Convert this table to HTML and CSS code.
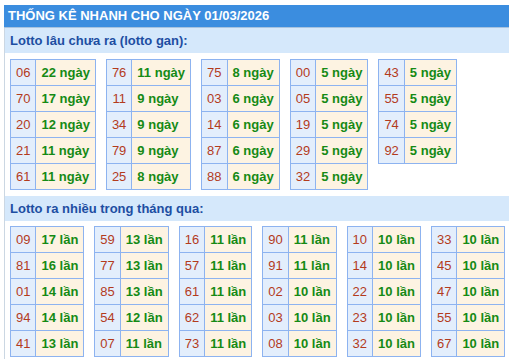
FILE: index.html
```html
<!DOCTYPE html>
<html lang="vi">
<head>
<meta charset="utf-8">
<title>Thống kê nhanh</title>
<link rel="stylesheet" href="styles.css">
</head>
<body>
<div class="box">
  <div class="head">THỐNG KÊ NHANH CHO NGÀY 01/03/2026</div>
  <div class="body">
    <div class="sub">Lotto lâu chưa ra (lotto gan):</div>
    <div class="tables">
      <table class="t"><tr><td class="n">06</td><td class="v">22 ngày</td></tr><tr><td class="n">70</td><td class="v">17 ngày</td></tr><tr><td class="n">20</td><td class="v">12 ngày</td></tr><tr><td class="n">21</td><td class="v">11 ngày</td></tr><tr><td class="n">61</td><td class="v">11 ngày</td></tr></table>
      <table class="t"><tr><td class="n">76</td><td class="v">11 ngày</td></tr><tr><td class="n">11</td><td class="v">9 ngày</td></tr><tr><td class="n">34</td><td class="v">9 ngày</td></tr><tr><td class="n">79</td><td class="v">9 ngày</td></tr><tr><td class="n">25</td><td class="v">8 ngày</td></tr></table>
      <table class="t"><tr><td class="n">75</td><td class="v">8 ngày</td></tr><tr><td class="n">03</td><td class="v">6 ngày</td></tr><tr><td class="n">14</td><td class="v">6 ngày</td></tr><tr><td class="n">87</td><td class="v">6 ngày</td></tr><tr><td class="n">88</td><td class="v">6 ngày</td></tr></table>
      <table class="t"><tr><td class="n">00</td><td class="v">5 ngày</td></tr><tr><td class="n">05</td><td class="v">5 ngày</td></tr><tr><td class="n">19</td><td class="v">5 ngày</td></tr><tr><td class="n">29</td><td class="v">5 ngày</td></tr><tr><td class="n">32</td><td class="v">5 ngày</td></tr></table>
      <table class="t"><tr><td class="n">43</td><td class="v">5 ngày</td></tr><tr><td class="n">55</td><td class="v">5 ngày</td></tr><tr><td class="n">74</td><td class="v">5 ngày</td></tr><tr><td class="n">92</td><td class="v">5 ngày</td></tr></table>
    </div>
    <div class="sub">Lotto ra nhiều trong tháng qua:</div>
    <div class="tables">
      <table class="t"><tr><td class="n">09</td><td class="v">17 lần</td></tr><tr><td class="n">81</td><td class="v">16 lần</td></tr><tr><td class="n">01</td><td class="v">14 lần</td></tr><tr><td class="n">94</td><td class="v">14 lần</td></tr><tr><td class="n">41</td><td class="v">13 lần</td></tr></table>
      <table class="t"><tr><td class="n">59</td><td class="v">13 lần</td></tr><tr><td class="n">77</td><td class="v">13 lần</td></tr><tr><td class="n">85</td><td class="v">13 lần</td></tr><tr><td class="n">54</td><td class="v">12 lần</td></tr><tr><td class="n">07</td><td class="v">11 lần</td></tr></table>
      <table class="t"><tr><td class="n">16</td><td class="v">11 lần</td></tr><tr><td class="n">57</td><td class="v">11 lần</td></tr><tr><td class="n">61</td><td class="v">11 lần</td></tr><tr><td class="n">62</td><td class="v">11 lần</td></tr><tr><td class="n">73</td><td class="v">11 lần</td></tr></table>
      <table class="t"><tr><td class="n">90</td><td class="v">11 lần</td></tr><tr><td class="n">91</td><td class="v">11 lần</td></tr><tr><td class="n">02</td><td class="v">10 lần</td></tr><tr><td class="n">03</td><td class="v">10 lần</td></tr><tr><td class="n">08</td><td class="v">10 lần</td></tr></table>
      <table class="t"><tr><td class="n">10</td><td class="v">10 lần</td></tr><tr><td class="n">14</td><td class="v">10 lần</td></tr><tr><td class="n">22</td><td class="v">10 lần</td></tr><tr><td class="n">23</td><td class="v">10 lần</td></tr><tr><td class="n">32</td><td class="v">10 lần</td></tr></table>
      <table class="t"><tr><td class="n">33</td><td class="v">10 lần</td></tr><tr><td class="n">45</td><td class="v">10 lần</td></tr><tr><td class="n">47</td><td class="v">10 lần</td></tr><tr><td class="n">55</td><td class="v">10 lần</td></tr><tr><td class="n">67</td><td class="v">10 lần</td></tr></table>
    </div>
  </div>
</div>
</body>
</html>
```
FILE: styles.css
```css
html, body {
  margin: 0;
  padding: 0;
  background: #ffffff;
  overflow: hidden;
}
body {
  font-family: "Liberation Sans", Arial, sans-serif;
  font-size: 13px;
}
.box {
  margin: 5px 0 0 4px;
}
.head {
  background: #3b8ddf;
  color: #ffffff;
  font-weight: bold;
  font-size: 13px;
  height: 22px;
  line-height: 22px;
  padding-left: 4px;
  border-bottom: 1px solid #a8c3df;
}
.body {
  border-left: 1px solid #cbd7e3;
}
.sub {
  background: #d5e8fb;
  color: #1d4ea2;
  font-weight: bold;
  font-size: 13px;
  height: 25px;
  line-height: 25px;
  padding-left: 5px;
}
.tables {
  display: flex;
  flex-wrap: wrap;
  align-items: flex-start;
  gap: 10px;
  padding: 6px 0 6px 5px;
}
.tables + .sub + .tables {
  padding: 5px 0 3px 5px;
}
.t {
  border-collapse: collapse;
}
.t td {
  border: 1px solid #8db3f0;
  height: 25px;
  padding: 0 5px;
  white-space: nowrap;
  line-height: 25px;
}
.t td.n {
  background: #e3eefc;
  color: #b33b1d;
  text-align: center;
}
.t td.v {
  background: #fdf3e2;
  color: #158a15;
  font-weight: bold;
}
```
